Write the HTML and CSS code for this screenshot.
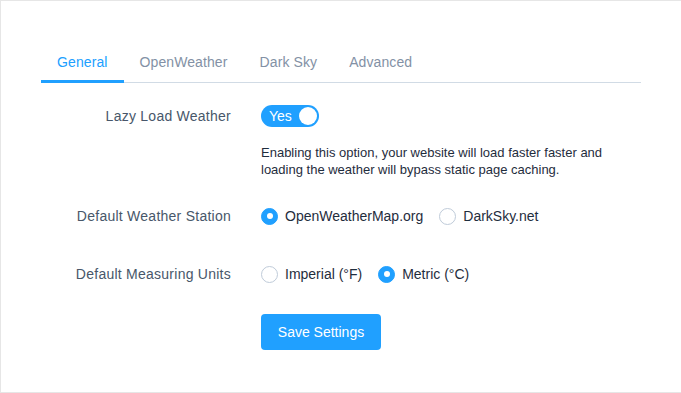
FILE: index.html
```html
<!DOCTYPE html>
<html lang="en">
<head>
  <meta charset="UTF-8">
  <title>Weather Settings</title>
  <meta name="viewport" content="width=device-width, initial-scale=1.0">
  <link rel="stylesheet" href="styles.css">
</head>
<body>
  <div class="panel">
    <div class="tabs">
      <div class="tab active">General</div>
      <div class="tab">OpenWeather</div>
      <div class="tab">Dark Sky</div>
      <div class="tab">Advanced</div>
    </div>

    <div class="form">
      <div class="row row-lazy">
        <label class="label">Lazy Load Weather</label>
        <div class="control">
          <div class="switch">
            <span class="switch-text">Yes</span>
            <span class="knob"></span>
          </div>
          <p class="help">Enabling this option, your website will load faster faster and<br>loading the weather will bypass static page caching.</p>
        </div>
      </div>

      <div class="row row-station">
        <label class="label">Default Weather Station</label>
        <div class="control radios">
          <span class="radio checked"><span class="dot"></span>OpenWeatherMap.org</span>
          <span class="radio"><span class="dot"></span>DarkSky.net</span>
        </div>
      </div>

      <div class="row row-units">
        <label class="label">Default Measuring Units</label>
        <div class="control radios">
          <span class="radio"><span class="dot"></span>Imperial (°F)</span>
          <span class="radio checked"><span class="dot"></span>Metric (°C)</span>
        </div>
      </div>

      <div class="row row-save">
        <span class="label"></span>
        <div class="control">
          <button class="save">Save Settings</button>
        </div>
      </div>
    </div>
  </div>
</body>
</html>
```

FILE: styles.css
```css
html, body {
  margin: 0;
  padding: 0;
  background: #fff;
}

body {
  font-family: "Liberation Sans", Arial, sans-serif;
  font-size: 14px;
  color: #48576a;
}

.panel {
  box-sizing: border-box;
  width: 681px;
  height: 393px;
  border: 1px solid #e6e6e6;
  border-right: none;
  padding: 40px 39px 0 40px;
}

.tabs {
  display: flex;
  border-bottom: 1px solid #d1dbe5;
  width: 600px;
}

.tab {
  height: 41px;
  line-height: 43px;
  padding: 0 16px;
  color: #8391a5;
  letter-spacing: 0.1px;
  box-sizing: border-box;
  border-bottom: 3px solid transparent;
  margin-bottom: -1px;
}

.tab.active {
  color: #20a0ff;
  border-bottom-color: #20a0ff;
  height: 42px;
}

.form {
  margin-top: 22px;
}

.row {
  display: flex;
  align-items: flex-start;
}

.label {
  width: 220px;
  box-sizing: border-box;
  padding-right: 30px;
  text-align: right;
  line-height: 22px;
  letter-spacing: 0.25px;
  color: #48576a;
}

.control {
  flex: 1;
}

.switch {
  display: inline-flex;
  align-items: center;
  justify-content: space-between;
  width: 58px;
  height: 22px;
  box-sizing: border-box;
  border-radius: 11px;
  background: #20a0ff;
  padding: 0 2px 0 8px;
  vertical-align: top;
}

.switch-text {
  color: #fff;
  font-size: 14px;
}

.knob {
  width: 18px;
  height: 18px;
  border-radius: 50%;
  background: #fff;
}

.help {
  margin: 17px 0 0;
  font-size: 13px;
  line-height: 17px;
  color: #1f2d3d;
}

.row-station {
  margin-top: 27px;
}

.row-units {
  margin-top: 36px;
}

.row-save {
  margin-top: 29px;
}

.radios {
  display: flex;
  gap: 16px;
  line-height: 22px;
}

.radio {
  display: inline-flex;
  align-items: center;
  color: #1f2d3d;
}

.dot {
  box-sizing: border-box;
  width: 17px;
  height: 17px;
  border: 1px solid #bfcbd9;
  border-radius: 50%;
  margin-right: 7px;
  background: #fff;
  position: relative;
}

.radio.checked .dot {
  background: #20a0ff;
  border-color: #20a0ff;
}

.radio.checked .dot::after {
  content: "";
  position: absolute;
  left: 50%;
  top: 50%;
  width: 6px;
  height: 6px;
  margin: -3px 0 0 -3px;
  border-radius: 50%;
  background: #fff;
}

.save {
  font-family: inherit;
  font-size: 14px;
  width: 120px;
  height: 36px;
  border: none;
  border-radius: 4px;
  background: #20a0ff;
  color: #fff;
  cursor: pointer;
}
```
